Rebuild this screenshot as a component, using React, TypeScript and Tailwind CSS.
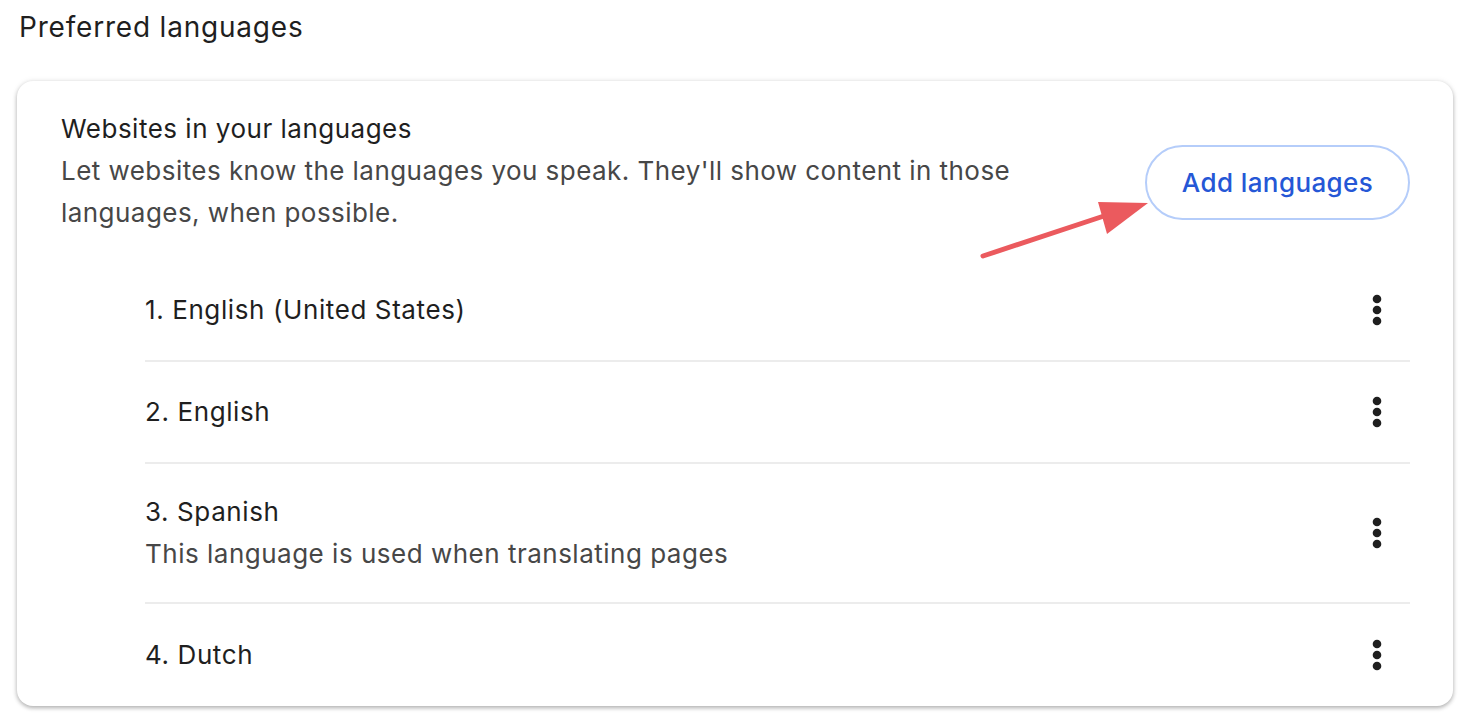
import React from 'react';

const languages = [
  { name: '1. English (United States)' },
  { name: '2. English' },
  { name: '3. Spanish', note: 'This language is used when translating pages' },
  { name: '4. Dutch' },
];

const MoreIcon = () => (
  <svg width="12" height="34" viewBox="0 0 12 34" className="text-[#1f1f1f]">
    <circle cx="6" cy="6" r="4.3" fill="currentColor" />
    <circle cx="6" cy="17" r="4.3" fill="currentColor" />
    <circle cx="6" cy="28" r="4.3" fill="currentColor" />
  </svg>
);

export default function App() {
  return (
    <div className="relative h-[728px] w-[1480px] overflow-hidden bg-white font-['Inter','Noto_Sans',sans-serif] text-[#1f1f1f]">
      <div className="pl-[19px] pt-[7px] text-[28px] leading-[40px] tracking-[0.8px]">Preferred languages</div>

      <div className="ml-[17px] mt-[34px] w-[1436px] rounded-[16px] bg-white pl-[44px] pr-[43px] pt-[27px] shadow-[0_2px_4px_rgba(0,0,0,0.28),0_0_6px_rgba(0,0,0,0.08)]">
        <div className="flex items-start justify-between">
          <div className="w-[1000px]">
            <div className="text-[26px] leading-[42px] tracking-[0.5px]">Websites in your languages</div>
            <div className="text-[26px] leading-[42px] tracking-[0.45px] text-[#474747]">
              Let websites know the languages you speak. They'll show content in those languages, when possible.
            </div>
          </div>
          <button className="mt-[37px] flex h-[75px] w-[265px] items-center justify-center rounded-full border-2 border-[#b5cdfa] bg-white text-[26px] font-medium tracking-[0.4px] text-[#2557d6]">
            Add languages
          </button>
        </div>

        <div className="ml-[84px] mt-[26px]">
          {languages.map((lang, i) => (
            <div
              key={i}
              className={`flex min-h-[102px] items-center justify-between py-[27px] ${i < languages.length - 1 ? 'border-b-2 border-[#ececec]' : ''}`}
            >
              <div>
                <div className="text-[26px] leading-[42px] tracking-[0.6px]">{lang.name}</div>
                {lang.note && (
                  <div className="text-[26px] leading-[42px] tracking-[0.5px] text-[#474747]">{lang.note}</div>
                )}
              </div>
              <div className="mr-[27px]">
                <MoreIcon />
              </div>
            </div>
          ))}
        </div>
      </div>

      {/* annotation arrow */}
      <svg className="pointer-events-none absolute left-0 top-0" width="1480" height="728">
        <line x1="983" y1="256" x2="1110" y2="214" stroke="#eb5a5e" strokeWidth="5" strokeLinecap="round" />
        <polygon points="1148,203 1098,202 1107,234" fill="#eb5a5e" />
      </svg>
    </div>
  );
}
